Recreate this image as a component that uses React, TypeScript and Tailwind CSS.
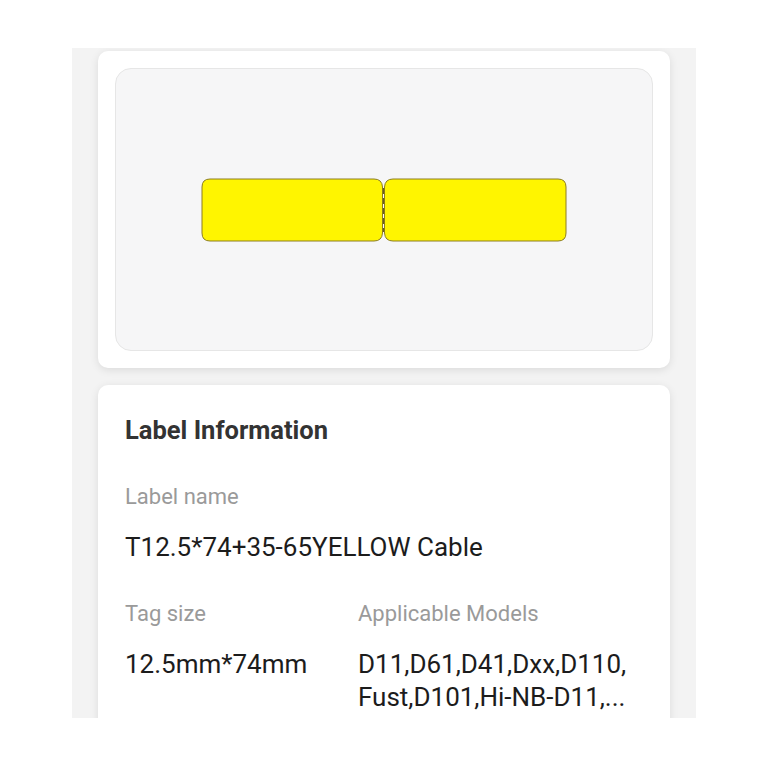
import React from 'react';

function CableLabel() {
  return (
    <svg width="366" height="64" viewBox="0 0 366 64" className="block">
      <path
        d="M9 1 H173 Q181 1 181.5 9 V55 Q181 63 173 63 H9 Q1 63 1 55 V9 Q1 1 9 1 Z"
        fill="#fff500"
        stroke="#8c7d22"
        strokeWidth="1"
      />
      <path
        d="M192 1 H357 Q365 1 365 9 V55 Q365 63 357 63 H192 Q184 63 183.5 55 V9 Q184 1 192 1 Z"
        fill="#fff500"
        stroke="#8c7d22"
        strokeWidth="1"
      />
      <line x1="182.5" y1="10" x2="182.5" y2="54" stroke="#6b5e1a" strokeWidth="1.2" strokeDasharray="6 4" />
    </svg>
  );
}

function Field({ label, children }: { label: string; children: React.ReactNode }) {
  return (
    <div>
      <div className="text-[22px] leading-[28px] text-[#9a9a9a]">{label}</div>
      <div className="mt-[20px] text-[26px] leading-[33px] text-[#1c1c1c]">{children}</div>
    </div>
  );
}

export default function App() {
  return (
    <div className="min-h-screen bg-white pt-[48px]" style={{ fontFamily: 'Roboto, "Noto Sans", sans-serif' }}>
      <div className="ml-[72px] w-[624px] h-[670px] overflow-hidden bg-[#f3f3f3] px-[26px] pt-[3px]">
        {/* Preview card */}
        <div className="rounded-[10px] bg-white p-[17px] shadow-[0_2px_8px_rgba(0,0,0,0.10)]">
          <div className="flex h-[283px] items-center justify-center rounded-[16px] border border-[#e6e6e6] bg-[#f6f6f7]">
            <CableLabel />
          </div>
        </div>

        {/* Info card */}
        <div className="mt-[17px] rounded-[10px] bg-white px-[27px] pt-[29px] pb-[40px] shadow-[0_2px_8px_rgba(0,0,0,0.10)]">
          <h2 className="text-[25.5px] font-bold leading-[32px] text-[#333333]">Label Information</h2>

          <div className="mt-[37px]">
            <Field label="Label name">T12.5*74+35-65YELLOW Cable</Field>
          </div>

          <div className="mt-[36px] grid grid-cols-[233px_1fr]">
            <Field label="Tag size">12.5mm*74mm</Field>
            <Field label="Applicable Models">
              D11,D61,D41,Dxx,D110,
              <br />
              Fust,D101,Hi-NB-D11,...
            </Field>
          </div>
        </div>
      </div>
    </div>
  );
}
